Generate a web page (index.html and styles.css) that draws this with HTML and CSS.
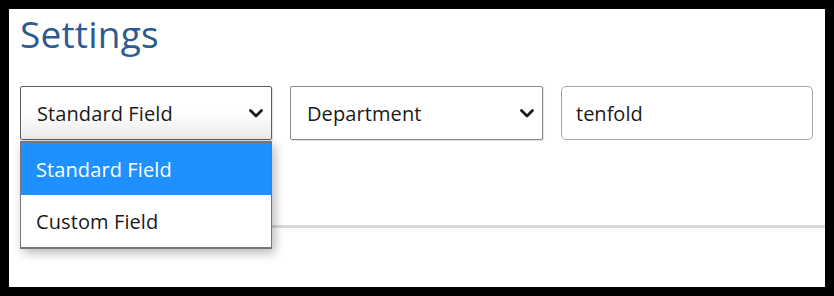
FILE: index.html
```html
<!DOCTYPE html>
<html lang="en">
<head>
<meta charset="utf-8">
<title>Settings</title>
<link rel="stylesheet" href="styles.css">
</head>
<body>
<div class="frame">
  <div class="page">
    <h1 class="title">Settings</h1>
    <div class="filters">
      <div class="field">
        <div class="select select-open">
          <span class="select-label">Standard Field</span>
          <svg class="chevron" width="14" height="9" viewBox="0 0 14 9"><polyline points="1.5,1.5 7,7 12.5,1.5" fill="none" stroke="#1a1a1a" stroke-width="2.8" stroke-linecap="round" stroke-linejoin="round"/></svg>
        </div>
        <ul class="menu">
          <li class="option option-active">Standard Field</li>
          <li class="option">Custom Field</li>
        </ul>
      </div>
      <div class="field">
        <div class="select">
          <span class="select-label">Department</span>
          <svg class="chevron" width="14" height="9" viewBox="0 0 14 9"><polyline points="1.5,1.5 7,7 12.5,1.5" fill="none" stroke="#1a1a1a" stroke-width="2.8" stroke-linecap="round" stroke-linejoin="round"/></svg>
        </div>
      </div>
      <div class="field">
        <div class="text-input">tenfold</div>
      </div>
    </div>
    <div class="divider"></div>
  </div>
</div>
</body>
</html>
```

FILE: styles.css
```css
* { box-sizing: border-box; }
html, body {
  margin: 0;
  padding: 0;
  background: #ffffff;
}
body {
  font-family: "Open Sans", "Liberation Sans", sans-serif;
  color: #1a1a1a;
}
.frame {
  width: 834px;
  height: 296px;
  border: 9px solid #000;
  background: #fff;
  overflow: hidden;
}
.page {
  padding: 3px 12px 0 11px;
}
.title {
  margin: 0;
  font-size: 37px;
  line-height: 44px;
  font-weight: 400;
  color: #2d5a92;
  letter-spacing: 0.2px;
}
.filters {
  margin-top: 30px;
  display: grid;
  grid-template-columns: 252px 253px 252px;
  column-gap: 18px;
}
.field {
  position: relative;
}
.select {
  height: 54px;
  border: 1px solid #8a8a8a;
  border-radius: 2px;
  box-shadow: 1px 1px 1px rgba(0,0,0,0.12);
  display: flex;
  align-items: center;
  justify-content: space-between;
  padding: 0 8px 0 16px;
  background: #fff;
  font-size: 20px;
  letter-spacing: 0.1px;
}
.select-open {
  border-color: #5e5e5e;
  background: linear-gradient(#ffffff 45%, #ebebeb);
}
.chevron {
  display: block;
}
.text-input {
  height: 54px;
  border: 1px solid #a6a6a6;
  border-radius: 5px;
  display: flex;
  align-items: center;
  padding: 0 14px;
  font-size: 20px;
  color: #1a1a1a;
}
.menu {
  position: absolute;
  top: 55px;
  left: 0;
  width: 252px;
  margin: 0;
  padding: 0;
  list-style: none;
  background: #fff;
  border: 1px solid #777;
  border-top-width: 2px;
  border-bottom-width: 2px;
  box-shadow: 3px 4px 10px rgba(0,0,0,0.28);
  z-index: 2;
}
.option {
  height: 52px;
  display: flex;
  align-items: center;
  padding: 0 15px;
  font-size: 20px;
  color: #1a1a1a;
  letter-spacing: 0.1px;
}
.option-active {
  background: #1e90ff;
  color: #ffffff;
}
.divider {
  margin-top: 85px;
  margin-right: -12px;
  height: 3px;
  background: #d9d9d9;
}
```
